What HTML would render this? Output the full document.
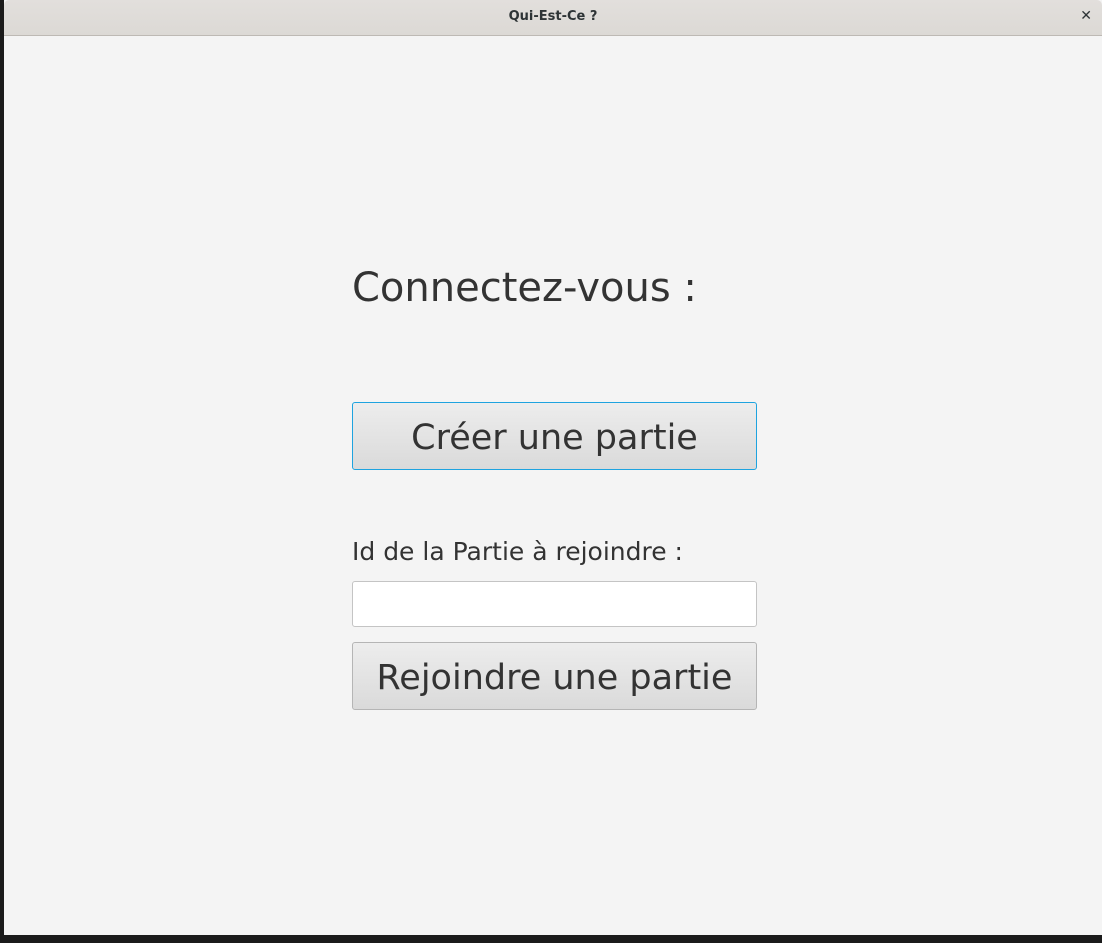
<!DOCTYPE html>
<html><head><style>
body{margin:0;width:1102px;height:943px;background:#1b1b1b;overflow:hidden;position:relative;font-family:"DejaVu Sans","Liberation Sans",sans-serif;}
.win{position:absolute;left:4px;top:0;width:1098px;height:935px;background:#f4f4f4;}
.title{position:absolute;left:0;top:0;width:1098px;height:35px;background:linear-gradient(#e2dfdc,#dcd9d5);border-bottom:1px solid #bdb9b4;border-radius:5px 5px 0 0;}
.title span{position:absolute;left:0;right:0;top:9px;text-align:center;font-size:13px;font-weight:bold;color:#2e3436;}
.x{position:absolute;right:10px;top:8px;font-size:14px;font-weight:bold;color:#2e3436;}
.h{position:absolute;left:348px;top:265px;font-size:40px;color:#333;}
.btn{position:absolute;left:348px;width:405px;box-sizing:border-box;border:1px solid #b5b5b5;border-radius:3px;background:linear-gradient(#ededed,#dadada);color:#333;font-size:35px;text-align:center;}
.lbl{position:absolute;left:348px;top:537px;font-size:25px;color:#333;}
.inp{position:absolute;left:348px;top:581px;width:405px;height:46px;box-sizing:border-box;background:#fff;border:1px solid #c4c4c4;border-radius:3px;}
</style></head><body>
<div class="win">
<div class="title"><span>Qui-Est-Ce ?</span><div class="x">✕</div></div>
<div class="h">Connectez-vous :</div>
<div class="btn" style="top:402px;height:68px;line-height:70px;border:1px solid #1ea3df;">Créer une partie</div>
<div class="lbl">Id de la Partie à rejoindre :</div>
<div class="inp"></div>
<div class="btn" style="top:642px;height:68px;line-height:70px;">Rejoindre une partie</div>
</div>
</body></html>
